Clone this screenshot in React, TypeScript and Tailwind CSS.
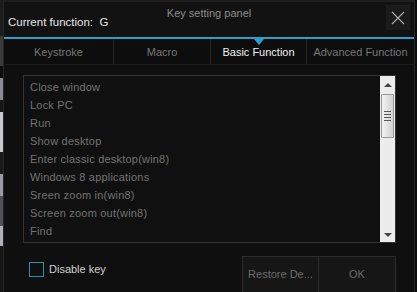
import React from "react";

const items = [
  "Close window",
  "Lock PC",
  "Run",
  "Show desktop",
  "Enter classic desktop(win8)",
  "Windows 8 applications",
  "Sreen zoom in(win8)",
  "Screen zoom out(win8)",
  "Find",
];

const tabs = [
  { label: "Keystroke", w: "w-[110px]" },
  { label: "Macro", w: "w-[97px]" },
  { label: "Basic Function", w: "w-[96px]", active: true },
  { label: "Advanced Function", w: "flex-1" },
];

export default function App() {
  return (
    <div
      className="w-[417px] h-[292px] flex bg-[#0a0a0a] overflow-hidden"
      style={{ fontFamily: '"Liberation Sans", Arial, sans-serif' }}
    >
      {/* desktop strip at left */}
      <div className="w-[3px] shrink-0 flex flex-col">
        <div className="h-[36px] bg-[#1c1c1c]" />
        <div className="h-[30px] bg-[#3a3a3a]" />
        <div className="h-[12px] bg-[#0e0e0e]" />
        <div className="h-[22px] bg-[#8a8a90]" />
        <div className="h-[12px] bg-[#161616]" />
        <div className="h-[40px] bg-[#c8c8cc]" />
        <div className="h-[22px] bg-[#1a1a1a]" />
        <div className="h-[22px] bg-[#9a9aa0]" />
        <div className="h-[30px] bg-[#505058]" />
        <div className="h-[20px] bg-[#b0b0b8]" />
        <div className="flex-1 bg-[#151515]" />
      </div>

      {/* dialog */}
      <div className="w-[412px] shrink-0 flex flex-col bg-[#0f0f0f] border-l border-r border-[#262626]">
        {/* header */}
        <div className="h-[37px] shrink-0 grid grid-cols-[1fr_auto_1fr] bg-[#121212] border-t-[2px] border-[#1e1e1e]">
          <div className="pl-[4px] pt-[12px] text-[11.5px] text-[#e6e6e6] whitespace-nowrap">
            Current function:&nbsp; G
          </div>
          <div className="pt-[3px] text-[11px] text-[#8d8d8d] whitespace-nowrap">
            Key setting panel
          </div>
          <div className="flex justify-end pr-[4px] pt-[3px]">
            <div className="w-[24px] h-[25px] bg-[#1b1b1b] flex items-center justify-center">
              <svg width="14" height="14" viewBox="0 0 14 14">
                <path d="M1 1 L13 13 M13 1 L1 13" stroke="#a8a8a8" strokeWidth="1.2" />
              </svg>
            </div>
          </div>
        </div>
        <div className="h-[2px] shrink-0 bg-[#2f9ccb]" />

        {/* tabs */}
        <div className="h-[26px] shrink-0 flex bg-[#0d0d0d] border-b border-[#1c1c1c]">
          {tabs.map((t, i) => (
            <div
              key={t.label}
              className={`${t.w} relative flex items-center justify-center pt-[1px] text-[11px] whitespace-nowrap ${
                i < 3 ? "border-r border-[#262626]" : ""
              } ${t.active ? "text-[#f2f2f2]" : "text-[#767676]"}`}
            >
              {t.active && (
                <div className="absolute top-0 left-1/2 -translate-x-1/2 w-0 h-0 border-l-[5px] border-r-[5px] border-t-[6px] border-l-transparent border-r-transparent border-t-[#2f9ccb]" />
              )}
              {t.label}
            </div>
          ))}
        </div>

        {/* list */}
        <div className="shrink-0 pt-[10px] pl-[19px] pr-[18px]">
          <div className="h-[168px] flex border border-[#333333] bg-[#101010]">
            <div className="flex-1 flex flex-col pt-[2px] pl-[6px]">
              {items.map((it) => (
                <div
                  key={it}
                  className="h-[18px] flex items-center text-[11px] tracking-[0.2px] text-[#737373] whitespace-nowrap"
                >
                  {it}
                </div>
              ))}
            </div>
            <div className="w-[15px] bg-[#ececec] flex flex-col items-center">
              <div className="h-[18px] flex items-center justify-center">
                <div className="w-0 h-0 border-l-[4px] border-r-[4px] border-b-[4px] border-l-transparent border-r-transparent border-b-[#444]" />
              </div>
              <div className="w-[13px] h-[44px] border border-[#9a9a9a] rounded-[1px] bg-gradient-to-r from-[#f4f4f4] via-[#e2e2e2] to-[#d0d0d0] flex flex-col items-center justify-center gap-[2px]">
                <div className="w-[7px] h-[1px] bg-[#555]" />
                <div className="w-[7px] h-[1px] bg-[#555]" />
                <div className="w-[7px] h-[1px] bg-[#555]" />
                <div className="w-[7px] h-[1px] bg-[#555]" />
              </div>
              <div className="flex-1" />
              <div className="h-[14px] flex items-center justify-center">
                <div className="w-0 h-0 border-l-[4px] border-r-[4px] border-t-[4px] border-l-transparent border-r-transparent border-t-[#444]" />
              </div>
            </div>
          </div>
        </div>

        {/* bottom */}
        <div className="shrink-0 flex pt-[13px] pl-[25px] pr-[18px]">
          <div className="flex items-start pt-[6px] gap-[5px]">
            <div className="w-[15px] h-[15px] border border-[#2f8fa8]" />
            <span className="text-[11px] text-[#cfcfcf] leading-[15px]">Disable key</span>
          </div>
          <div className="flex-1" />
          <div className="flex">
            <div className="w-[77px] h-[40px] border border-[#2c2c2c] bg-[#161616] flex items-center justify-center text-[11px] text-[#6c6c6c] pb-[4px]">
              Restore De...
            </div>
            <div className="w-[77px] h-[40px] border border-l-0 border-[#2c2c2c] bg-[#161616] flex items-center justify-center text-[11px] text-[#6c6c6c] pb-[4px]">
              OK
            </div>
          </div>
        </div>
      </div>

      {/* right edge */}
      <div className="flex-1 bg-[#0b0b0b]" />
    </div>
  );
}
